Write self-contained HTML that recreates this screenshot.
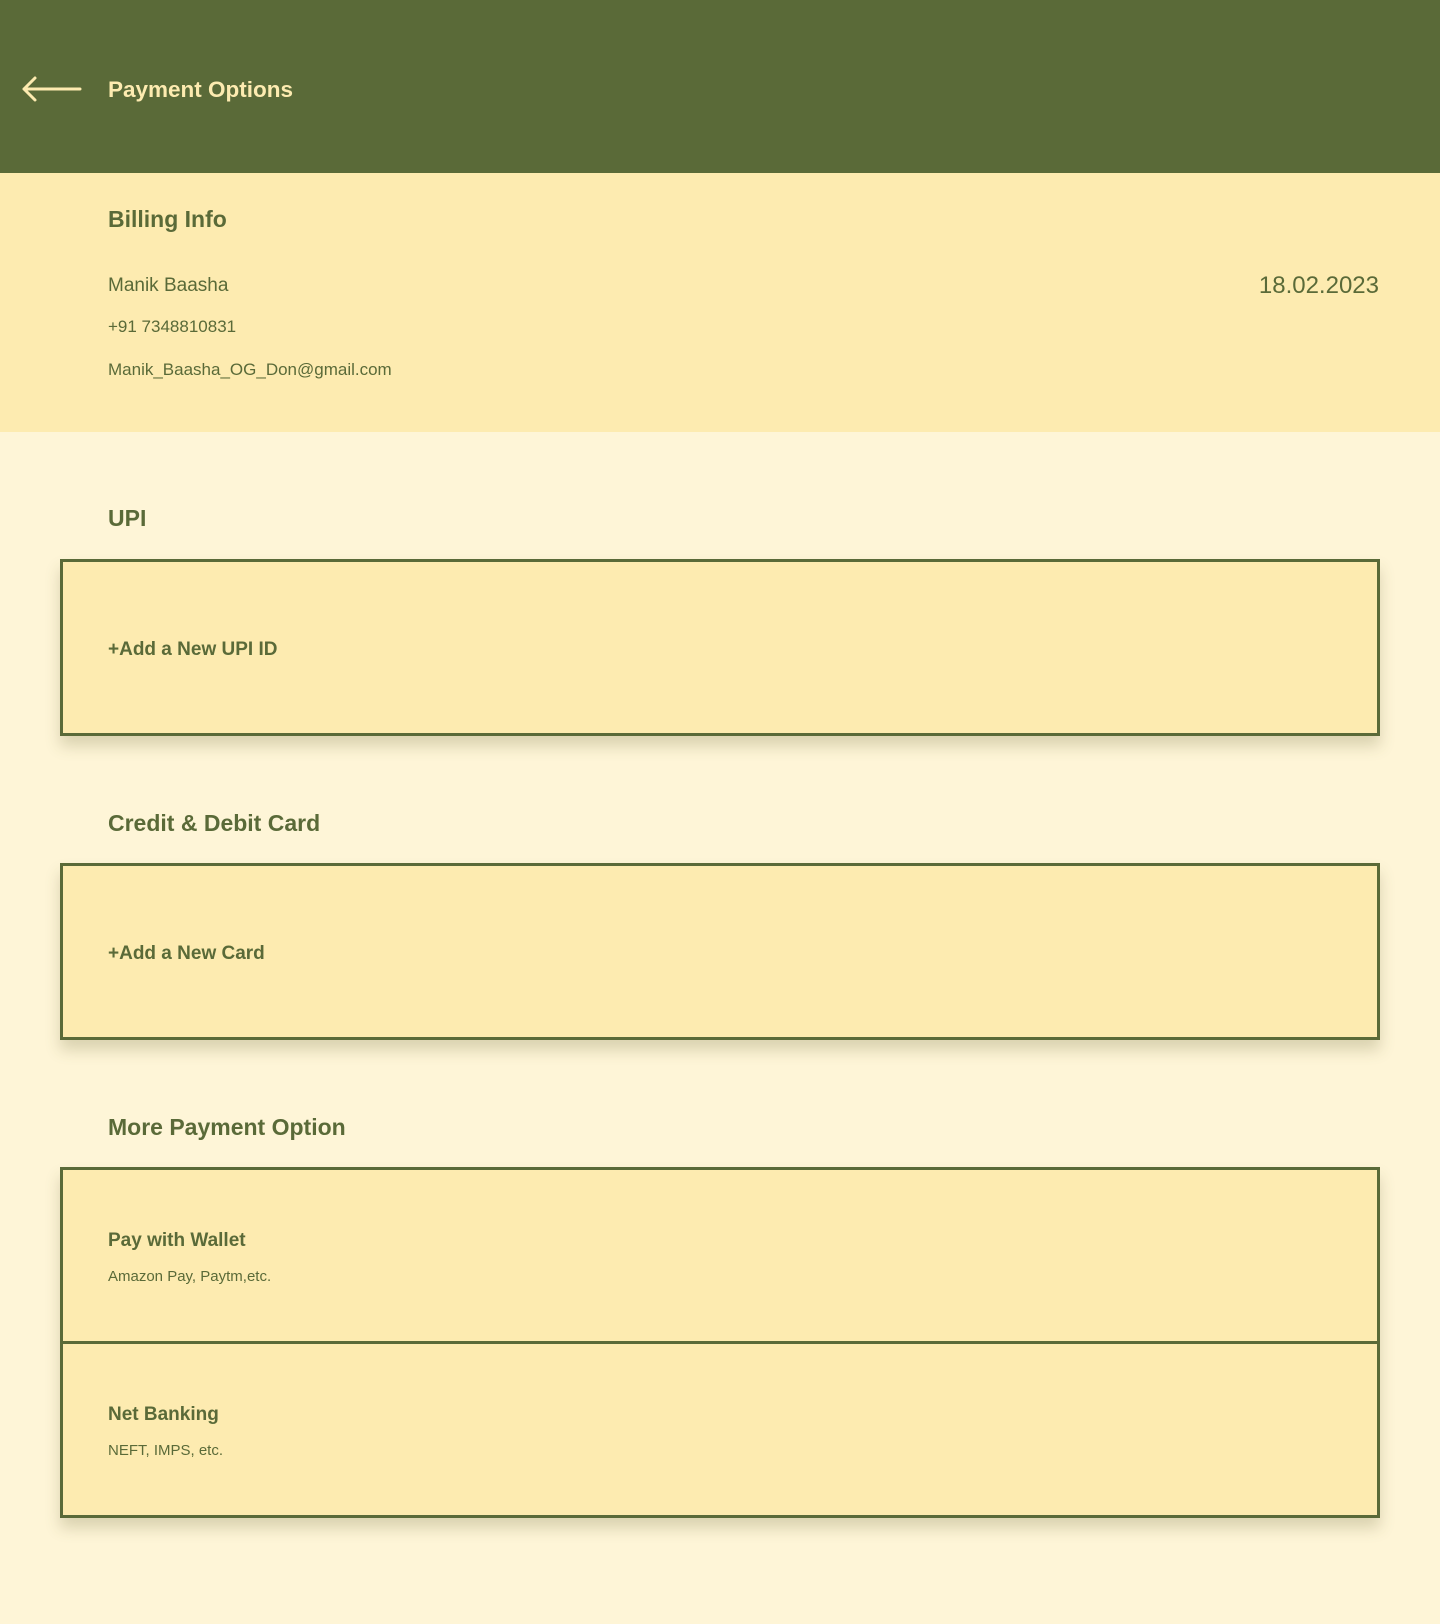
<!DOCTYPE html>
<html><head><meta charset="utf-8"><style>
*{margin:0;padding:0;box-sizing:border-box}
body{width:1440px;height:1624px;background:#fef5d7;font-family:"Liberation Sans",sans-serif;color:#5a6a38;position:relative;overflow:hidden}
.a{position:absolute;white-space:nowrap;line-height:30px}
.hdr{position:absolute;left:0;top:0;width:1440px;height:173px;background:#5a6a38}
.bill{position:absolute;left:0;top:173px;width:1440px;height:259px;background:#fdebb0}
.box{position:absolute;left:60px;width:1320px;background:#fdebb0;border:3px solid #5a6a38;box-shadow:0 10px 14px rgba(90,90,40,0.22)}
</style></head><body>
<div class="hdr"></div>
<svg style="position:absolute;left:20px;top:74px" width="64" height="30" viewBox="0 0 64 30"><path d="M4 15H60M15 4L4 15L15 26" fill="none" stroke="#fdebb0" stroke-width="3" stroke-linecap="round" stroke-linejoin="round"/></svg>
<div class="a" style="left:108px;top:75px;font-size:22.5px;font-weight:bold;color:#fdebb0">Payment Options</div>
<div class="bill"></div>
<div class="a" style="left:108px;top:204px;font-size:23px;font-weight:bold">Billing Info</div>
<div class="a" style="left:108px;top:271px;font-size:19px">Manik Baasha</div>
<div class="a" style="left:108px;top:312px;font-size:17px">+91 7348810831</div>
<div class="a" style="left:108px;top:355px;font-size:17px">Manik_Baasha_OG_Don@gmail.com</div>
<div class="a" style="right:61px;top:271px;font-size:24px">18.02.2023</div>
<div class="a" style="left:108px;top:503px;font-size:23px;font-weight:bold">UPI</div>
<div class="box" style="top:559px;height:177px"></div>
<div class="a" style="left:108px;top:635px;font-size:19px;font-weight:bold">+Add a New UPI ID</div>
<div class="a" style="left:108px;top:808px;font-size:23px;font-weight:bold">Credit &amp; Debit Card</div>
<div class="box" style="top:863px;height:177px"></div>
<div class="a" style="left:108px;top:939px;font-size:19px;font-weight:bold">+Add a New Card</div>
<div class="a" style="left:108px;top:1112px;font-size:23px;font-weight:bold">More Payment Option</div>
<div class="box" style="top:1167px;height:351px"></div>
<div style="position:absolute;left:60px;top:1341px;width:1320px;height:3px;background:#5a6a38"></div>
<div class="a" style="left:108px;top:1226px;font-size:19px;font-weight:bold">Pay with Wallet</div>
<div class="a" style="left:108px;top:1262px;font-size:15px">Amazon Pay, Paytm,etc.</div>
<div class="a" style="left:108px;top:1400px;font-size:19px;font-weight:bold">Net Banking</div>
<div class="a" style="left:108px;top:1436px;font-size:15px">NEFT, IMPS, etc.</div>
</body></html>
